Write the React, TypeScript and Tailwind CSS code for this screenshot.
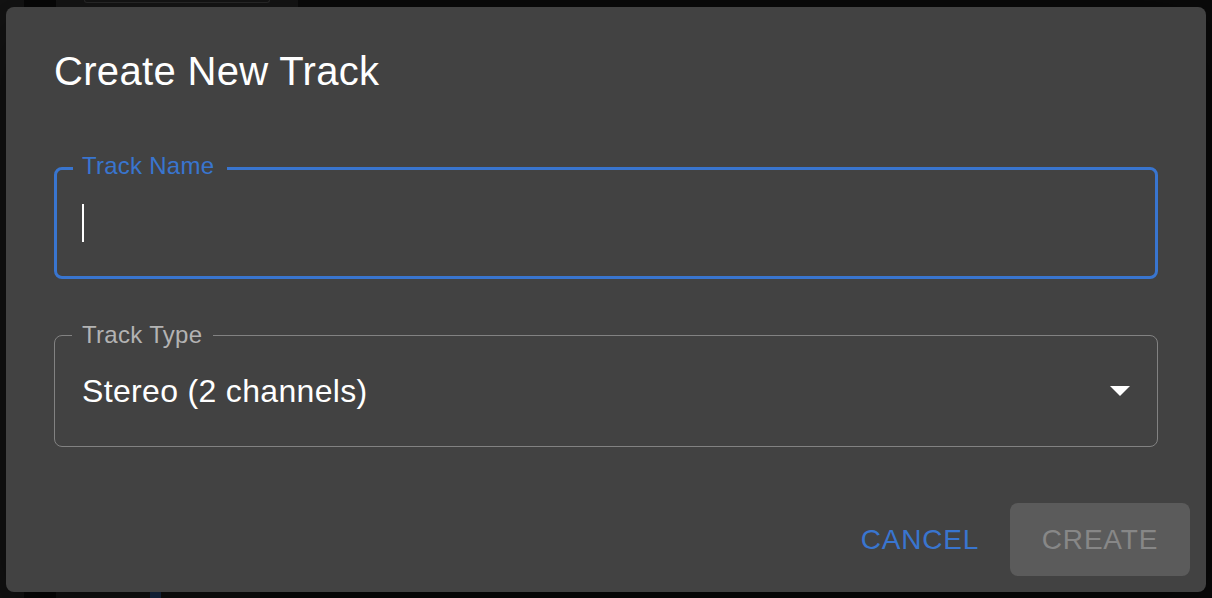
import React from "react";

export default function App() {
  return (
    <div
      className="relative w-[1212px] h-[598px] overflow-hidden bg-[#0a0a0a]"
      style={{ fontFamily: '"Liberation Sans", Arial, sans-serif' }}
    >
      {/* background app (dimmed by backdrop) */}
      <div className="flex h-full w-full">
        <div className="w-[24px] h-full bg-[#131313]" />
        <div className="w-[32px] h-full bg-[#070707]" />
        <div className="w-[242px] h-full bg-[#151515] flex flex-col justify-between">
          <div className="mx-[28px] h-[3px] rounded-b-[6px] border-b border-x border-[#2a2a2a]" />
          <div className="flex h-[7px]">
            <div className="w-[94px] bg-[#141414]" />
            <div className="w-[11px] bg-[#1b3152]" />
            <div className="w-[99px] bg-[#121212]" />
            <div className="flex-1 bg-[#0a0a0a]" />
          </div>
        </div>
        <div className="flex-1 h-full bg-[#0a0a0a]" />
      </div>

      {/* dialog */}
      <div className="absolute left-[6px] top-[7px] w-[1200px] h-[585px] rounded-[8px] bg-[#424242] flex flex-col shadow-[0_22px_70px_rgba(0,0,0,0.5)]">
        <h2 className="px-[48px] py-[32px] text-[40px] leading-[64px] tracking-[0.33px] text-white font-normal">
          Create New Track
        </h2>

        <div className="px-[48px] pt-[32px] pb-[40px] flex flex-col gap-[56px]">
          {/* Track Name (focused) */}
          <div className="relative h-[112px] rounded-[8px] border-[3px] border-[#3975cf] flex items-center">
            <span className="absolute left-[16px] top-[-16px] bg-[#424242] pl-[9px] pr-[13px] text-[24px] leading-[24px] tracking-[0.25px] text-[#3975cf]">
              Track Name
            </span>
            <span className="ml-[25px] w-[2px] h-[38px] bg-white" />
          </div>

          {/* Track Type select */}
          <div className="relative h-[112px] rounded-[8px] border border-[#828282] flex items-center justify-between">
            <span className="absolute left-[17px] top-[-13px] bg-[#424242] pl-[10px] pr-[11px] text-[24px] leading-[24px] tracking-[0.3px] text-[#b3b3b3]">
              Track Type
            </span>
            <span className="ml-[27px] text-[32px] leading-[40px] tracking-[0.33px] text-white">
              Stereo (2 channels)
            </span>
            <svg width="20" height="10" viewBox="0 0 20 10" className="mr-[27px]">
              <polygon points="0,0 20,0 10,10" fill="#ffffff" />
            </svg>
          </div>
        </div>

        <div className="flex justify-end items-center p-[16px] gap-[16px]">
          <button className="w-[148px] h-[73px] rounded-[8px] flex items-center justify-center text-[28px] tracking-[0.8px] text-[#3975cf]">
            CANCEL
          </button>
          <button className="w-[180px] h-[73px] rounded-[8px] bg-[#5b5b5b] flex items-center justify-center text-[28px] tracking-[0.8px] text-[#878787]">
            CREATE
          </button>
        </div>
      </div>
    </div>
  );
}
